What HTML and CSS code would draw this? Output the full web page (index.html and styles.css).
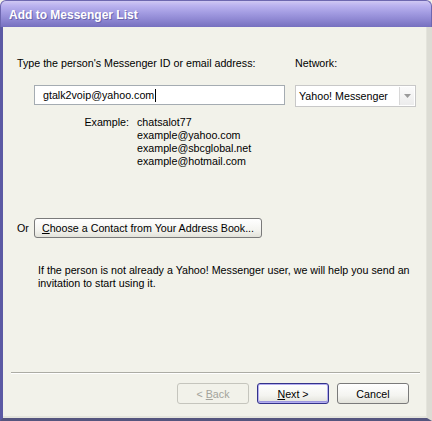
FILE: index.html
```html
<!DOCTYPE html>
<html>
<head>
<meta charset="utf-8">
<link rel="stylesheet" href="styles.css">
</head>
<body>
<div class="window">
  <div class="titlebar"><span class="title">Add to Messenger List</span></div>
  <div class="frame">
    <div class="content">
      <div class="row labels">
        <span class="lbl-id">Type the person's Messenger ID or email address:</span>
        <span class="lbl-net">Network:</span>
      </div>
      <div class="row inputs">
        <div class="textbox"><span>gtalk2voip@yahoo.com</span><span class="caret"></span></div>
        <div class="select">
          <span class="sel-text">Yahoo! Messenger</span>
          <span class="sel-btn"><svg width="7" height="4" viewBox="0 0 7 4"><path d="M0 0h7L3.5 4z" fill="#9a9a9a"/></svg></span>
        </div>
      </div>
      <div class="examples">
        <span class="ex-label">Example:</span>
        <div class="ex-list">
          <span>chatsalot77</span>
          <span>example@yahoo.com</span>
          <span>example@sbcglobal.net</span>
          <span>example@hotmail.com</span>
        </div>
      </div>
      <div class="row orrow">
        <span class="or">Or</span>
        <button class="btn addr"><u>C</u>hoose a Contact from Your Address Book...</button>
      </div>
      <p class="note">If the person is not already a Yahoo! Messenger user, we will help you send an invitation to start using it.</p>
    </div>
    <div class="separator"></div>
    <div class="buttons">
      <button class="btn disabled">&lt; <u>B</u>ack</button>
      <button class="btn default"><u>N</u>ext &gt;</button>
      <button class="btn">Cancel</button>
    </div>
  </div>
</div>
</body>
</html>
```
FILE: styles.css
```css
html, body {
  margin: 0;
  padding: 0;
  background: #f2f2ea;
}
.window {
  width: 432px;
  height: 421px;
  display: flex;
  flex-direction: column;
  font-family: "Liberation Sans", Arial, sans-serif;
  font-size: 10.7px;
  color: #000;
  box-sizing: border-box;
  overflow: hidden;
}
.titlebar {
  height: 27px;
  flex: none;
  box-sizing: border-box;
  border-radius: 6px 6px 0 0;
  background: linear-gradient(to bottom, #cfc8f3 0%, #bab2ef 18%, #a39ce2 45%, #8b84d0 75%, #7670bf 100%);
  border: 1px solid #6d67b0;
  border-bottom: none;
  padding-left: 8px;
  display: flex;
  align-items: center;
}
.title {
  color: #fff;
  font-weight: bold;
  font-size: 12px;
  text-shadow: 1px 1px 0 #6a64ad;
  padding-top: 2px;
}
.frame {
  flex: 1;
  display: flex;
  flex-direction: column;
  background: #f2f2ea;
  border-left: 3px solid #5c5aa4;
  border-right: 5px solid #dcdcd4;
  border-bottom: 3px solid #55557e;
  box-shadow: inset -1px -2px 0 #e4e4dc;
}
.content {
  flex: 1;
  padding: 29px 0 0 14px;
}
.row {
  display: flex;
  align-items: center;
}
.labels {
  height: 14px;
}
.lbl-id {
  width: 278px;
}
.inputs {
  margin-top: 15px;
  padding-left: 17px;
  align-items: flex-start;
}
.textbox {
  width: 251px;
  height: 20px;
  box-sizing: border-box;
  border: 1px solid #a5acb2;
  background: #fff;
  display: flex;
  align-items: center;
  padding-left: 8px;
}
.caret {
  width: 1px;
  height: 13px;
  background: #000;
  margin-left: 1px;
}
.select {
  margin-left: 10px;
  width: 121px;
  height: 22px;
  box-sizing: border-box;
  border: 1px solid #c8c8c8;
  background: #fff;
  display: flex;
  align-items: center;
  padding-left: 3px;
}
.sel-text {
  flex: 1;
}
.sel-btn {
  width: 15px;
  height: 18px;
  margin-right: 1px;
  box-sizing: border-box;
  border-left: 1px solid #d8d8d8;
  display: flex;
  align-items: center;
  justify-content: center;
  background: linear-gradient(to bottom, #fbfbfb, #ececec);
}
.examples {
  display: flex;
  margin-top: 9px;
  line-height: 13px;
}
.ex-label {
  width: 112px;
  text-align: right;
}
.ex-list {
  display: flex;
  flex-direction: column;
  margin-left: 8px;
}
.orrow {
  margin-top: 50px;
}
.or {
  width: 17px;
}
.btn {
  font-family: "Liberation Sans", Arial, sans-serif;
  font-size: 10.7px;
  color: #000;
  height: 21px;
  box-sizing: border-box;
  border: 1px solid #7a7a7a;
  border-radius: 3px;
  background: linear-gradient(to bottom, #ffffff 0%, #f4f4f0 60%, #e2e2da 100%);
  padding: 0;
  margin: 0;
}
.addr {
  width: 228px;
  height: 20px;
}
.note {
  margin: 26px 0 0 21px;
  width: 384px;
  line-height: 13px;
}
.separator {
  height: 0;
  border-top: 1px solid #acaca4;
  border-bottom: 1px solid #ffffff;
  margin: 0 7px 0 8px;
}
.buttons {
  height: 44px;
  display: flex;
  justify-content: flex-end;
  align-items: flex-start;
  gap: 8px;
  padding: 9px 18px 0 0;
  box-sizing: border-box;
}
.buttons .btn {
  width: 72px;
  height: 21px;
}
.btn.disabled {
  color: #a3a39b;
  border-color: #c5c5bd;
  background: #f2f2ea;
}
.btn.default {
  border: 1px solid #33338a;
  box-shadow: inset 0 0 0 1px #b4aef0, inset 0 -1px 0 1px #9d97e0;
}
```
